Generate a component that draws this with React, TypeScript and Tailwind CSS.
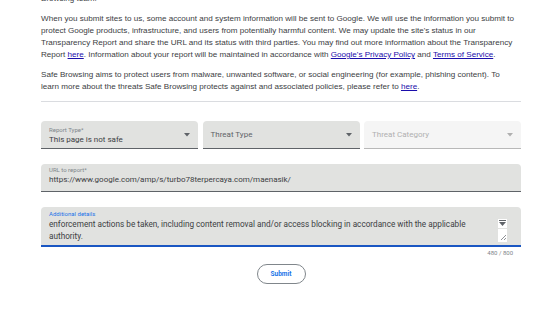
import { useState } from 'react';

function Arrow({ light }: { light?: boolean }) {
  return (
    <svg width="6" height="4" viewBox="0 0 6 4" className="shrink-0">
      <path d="M0 0 L6 0 L3 3.5 Z" fill={light ? '#b0b0b0' : '#5f6368'} />
    </svg>
  );
}

function Select({
  label,
  value,
  placeholder,
  disabled,
}: {
  label?: string;
  value?: string;
  placeholder?: string;
  disabled?: boolean;
}) {
  return (
    <div
      className={`h-[28px] rounded-t-[4px] border-b flex items-center justify-between pl-[8px] pr-[8px] ${
        disabled ? 'bg-[#f5f5f5] border-[#b8b8b8]' : 'bg-[#e1e2e0] border-[#5f6368]'
      }`}
    >
      {value ? (
        <div className="flex flex-col pt-[1px]">
          <span className="text-[6px] leading-[8px] text-[#80868b]">{label}</span>
          <span className="text-[8px] leading-[11px] text-[#3c4043]">{value}</span>
        </div>
      ) : (
        <span className={`text-[8px] ${disabled ? 'text-[#b0b0b0]' : 'text-[#5f6368]'}`}>
          {placeholder}
        </span>
      )}
      <Arrow light={disabled} />
    </div>
  );
}

export default function App() {
  const [details] = useState(
    'enforcement actions be taken, including content removal and/or access blocking in accordance with the applicable authority.'
  );

  return (
    <div className="w-[541px] h-[312px] overflow-hidden bg-white">
      <div className="ml-[41px] w-[480px] -mt-[7px] font-['Liberation_Sans',Arial,sans-serif] text-[8.1px] leading-[12px] text-[#3c4043]">
        <p>Browsing team.</p>
        <p className="mt-[8px] w-[478px]">
          When you submit sites to us, some account and system information will be sent to Google. We will use the
          information you submit to protect Google products, infrastructure, and users from potentially harmful
          content. We may update the site's status in our Transparency Report and share the URL and its status with
          third parties. You may find out more information about the Transparency Report{' '}
          <a className="text-[#1a0dab] underline">here</a>. Information about your report will be maintained in
          accordance with <a className="text-[#1a0dab] underline">Google's Privacy Policy</a> and{' '}
          <a className="text-[#1a0dab] underline">Terms of Service</a>.
        </p>
        <p className="mt-[8px] w-[478px]">
          Safe Browsing aims to protect users from malware, unwanted software, or social engineering (for example,
          phishing content). To learn more about the threats Safe Browsing protects against and associated policies,
          please refer to <a className="text-[#1a0dab] underline">here</a>.
        </p>
        <div className="mt-[8px] h-px bg-[#dadce0]" />

        <div className="font-['Roboto',sans-serif]">
          <div className="mt-[19px] grid grid-cols-3 gap-[4.5px]">
            <Select label="Report Type*" value="This page is not safe" />
            <Select placeholder="Threat Type" />
            <Select placeholder="Threat Category" disabled />
          </div>

          <div className="mt-[15px] h-[28px] rounded-t-[4px] bg-[#e1e2e0] border-b border-[#5f6368] pl-[8px] pt-[2px] flex flex-col">
            <span className="text-[6px] leading-[8px] text-[#80868b]">URL to report*</span>
            <span className="text-[8px] leading-[11px] text-[#3c4043]">
              https://www.google.com/amp/s/turbo78terpercaya.com/maenasik/
            </span>
          </div>

          <div className="mt-[15px] h-[40px] rounded-t-[4px] bg-[#e1e2e0] border-b-[2px] border-[#1a56c2] pl-[8px] pr-[14px] pt-[2px] flex">
            <div className="flex-1 flex flex-col pr-[14px]">
              <span className="text-[6px] leading-[9px] text-[#1a73e8]">Additional details</span>
              <span className="text-[8.2px] leading-[12px] text-[#3c4043]">{details}</span>
            </div>
            <div className="mt-[10px] w-[9px] flex flex-col">
              <div className="h-[9px] bg-white flex flex-col items-center pt-[1px]">
                <div className="w-[7px] h-[1px] bg-[#5f6368]" />
                <svg width="7" height="5" viewBox="0 0 7 5" className="mt-[1px]">
                  <path d="M0 0 L7 0 L3.5 4 Z" fill="#5f6368" />
                </svg>
              </div>
              <div className="h-[13px] mt-[1px] bg-white relative">
                <svg width="9" height="13" viewBox="0 0 9 13" className="absolute inset-0">
                  <path d="M8 6 L3 11 M8 9 L6 11" stroke="#5f6368" strokeWidth="0.7" />
                </svg>
              </div>
            </div>
          </div>
          <div className="mt-[1px] pr-[8px] text-right text-[6px] leading-[9px] text-[#80868b]">480 / 800</div>

          <div className="mt-[7px] flex justify-center">
            <button className="w-[49px] h-[20px] rounded-full border border-[#80868b] text-[6.5px] font-bold text-[#1a73e8] bg-white">
              Submit
            </button>
          </div>
        </div>
      </div>
    </div>
  );
}
